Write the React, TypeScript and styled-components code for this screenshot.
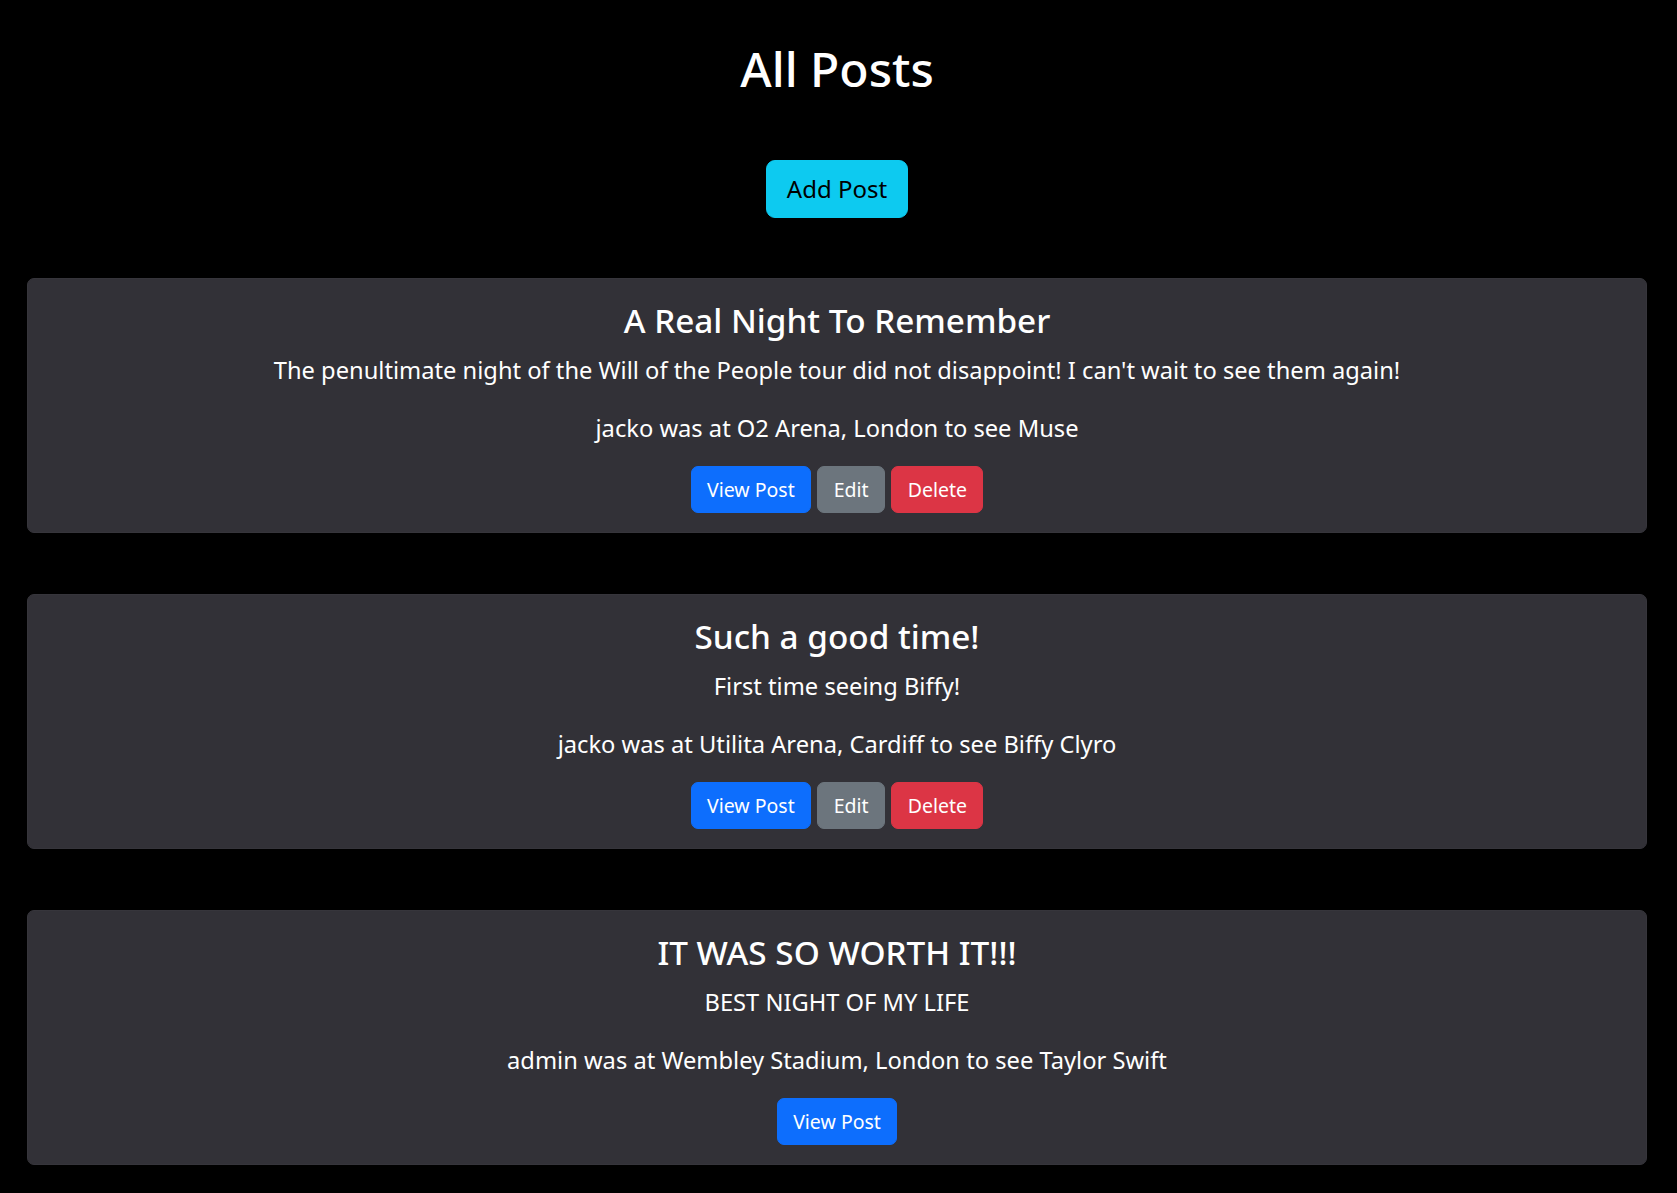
import React from "react";
import styled, { createGlobalStyle } from "styled-components";

const GlobalStyle = createGlobalStyle`
  html, body {
    margin: 0;
    padding: 0;
    background: #000;
  }
  body {
    color: #fff;
    font-family: "Noto Sans", "Open Sans", Arial, sans-serif;
    -webkit-font-smoothing: antialiased;
  }
  * { box-sizing: border-box; }
`;

const Page = styled.main`
  display: flex;
  flex-direction: column;
  align-items: center;
  padding: 40px 30px 28px 27px;
`;

const Heading = styled.h1`
  margin: 0;
  font-size: 48px;
  line-height: 58px;
  font-weight: 500;
  color: #fff;
`;

type Variant = "info" | "primary" | "secondary" | "danger";

const colors: Record<Variant, { bg: string; fg: string }> = {
  info: { bg: "#0dcaf0", fg: "#000" },
  primary: { bg: "#0d6efd", fg: "#fff" },
  secondary: { bg: "#6c757d", fg: "#fff" },
  danger: { bg: "#dc3545", fg: "#fff" },
};

const Button = styled.button<{ $variant: Variant; $large?: boolean }>`
  font-family: inherit;
  font-weight: 400;
  cursor: pointer;
  border: 1px solid ${(p) => colors[p.$variant].bg};
  background: ${(p) => colors[p.$variant].bg};
  color: ${(p) => colors[p.$variant].fg};
  font-size: ${(p) => (p.$large ? "24px" : "19.5px")};
  line-height: ${(p) => (p.$large ? "36px" : "30px")};
  padding: ${(p) => (p.$large ? "10px 20px" : "7.5px 15.5px")};
  border-radius: ${(p) => (p.$large ? "9px" : "7px")};
  white-space: nowrap;
`;

const AddButton = styled(Button)`
  margin-top: 62px;
`;

const PostList = styled.section`
  width: 100%;
  margin-top: 60px;
  display: flex;
  flex-direction: column;
  gap: 61px;
`;

const Card = styled.article`
  background: #323137;
  border: 1px solid #36353b;
  border-radius: 7px;
  padding: 21px 20px 19px;
  display: flex;
  flex-direction: column;
  align-items: center;
  text-align: center;
`;

const CardTitle = styled.h3`
  margin: 0;
  font-size: 33.3px;
  line-height: 40px;
  font-weight: 500;
`;

const CardText = styled.p<{ $gap: number }>`
  margin: ${(p) => p.$gap}px 0 0;
  font-size: 23.7px;
  line-height: 36px;
`;

const Actions = styled.div`
  margin-top: 20px;
  display: flex;
  gap: 6px;
  justify-content: center;
`;

type Post = {
  title: string;
  body: string;
  user: string;
  venue: string;
  artist: string;
  owner: boolean;
};

const posts: Post[] = [
  {
    title: "A Real Night To Remember",
    body: "The penultimate night of the Will of the People tour did not disappoint! I can't wait to see them again!",
    user: "jacko",
    venue: "O2 Arena, London",
    artist: "Muse",
    owner: true,
  },
  {
    title: "Such a good time!",
    body: "First time seeing Biffy!",
    user: "jacko",
    venue: "Utilita Arena, Cardiff",
    artist: "Biffy Clyro",
    owner: true,
  },
  {
    title: "IT WAS SO WORTH IT!!!",
    body: "BEST NIGHT OF MY LIFE",
    user: "admin",
    venue: "Wembley Stadium, London",
    artist: "Taylor Swift",
    owner: false,
  },
];

export default function App() {
  return (
    <>
      <GlobalStyle />
      <Page>
        <Heading>All Posts</Heading>
        <AddButton $variant="info" $large>
          Add Post
        </AddButton>
        <PostList>
          {posts.map((post) => (
            <Card key={post.title}>
              <CardTitle>{post.title}</CardTitle>
              <CardText $gap={12}>{post.body}</CardText>
              <CardText $gap={22}>
                {post.user} was at {post.venue} to see {post.artist}
              </CardText>
              <Actions>
                <Button $variant="primary">View Post</Button>
                {post.owner && (
                  <>
                    <Button $variant="secondary">Edit</Button>
                    <Button $variant="danger">Delete</Button>
                  </>
                )}
              </Actions>
            </Card>
          ))}
        </PostList>
      </Page>
    </>
  );
}
